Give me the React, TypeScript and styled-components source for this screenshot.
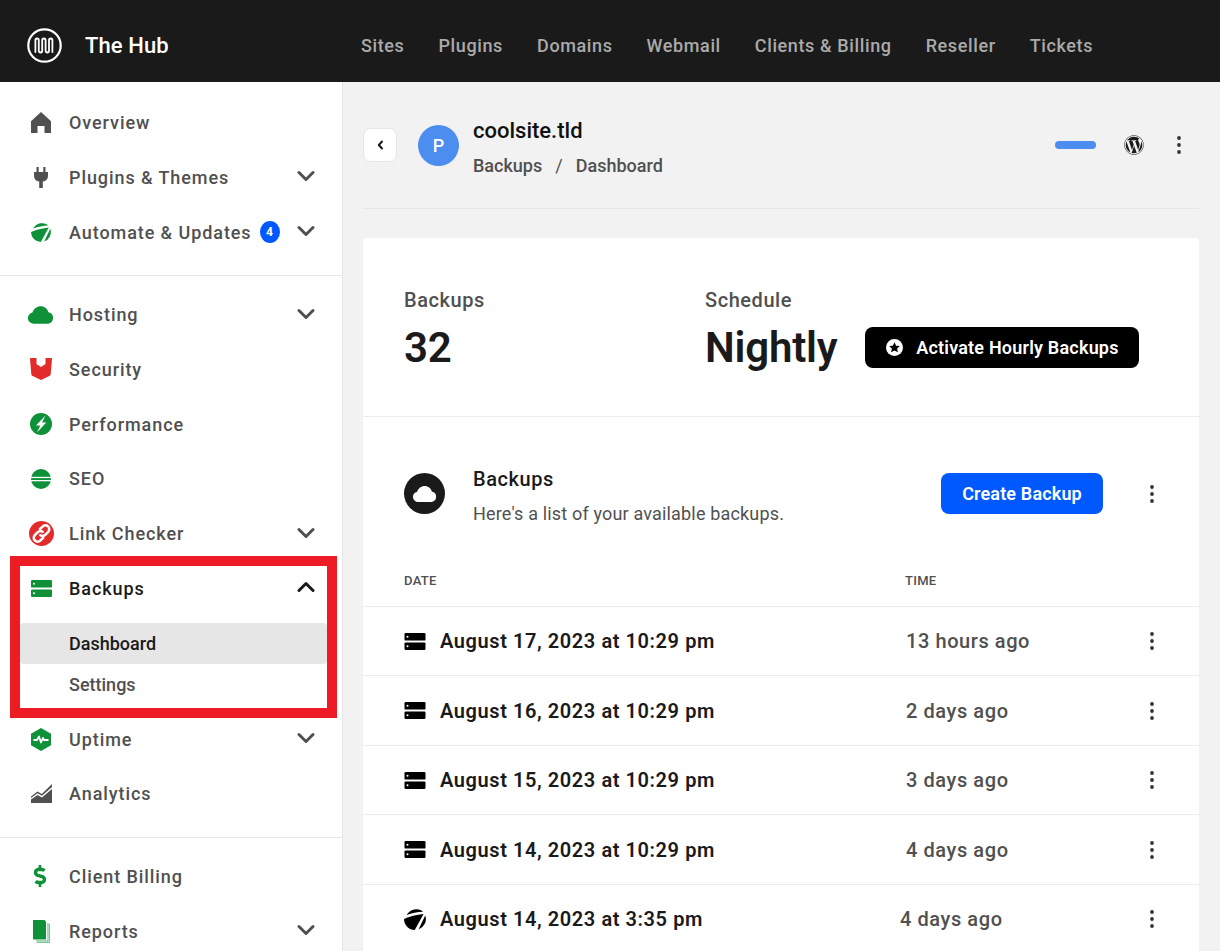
import { FC, ReactNode } from 'react';
import styled, { createGlobalStyle } from 'styled-components';
import { FaWordpress, FaDollarSign } from 'react-icons/fa';

const GREEN = '#0e9138';
const INK = '#1a1a1a';
const GREY = '#505050';

const GlobalStyle = createGlobalStyle`
    html, body {
        margin: 0;
        height: 100%;
        overflow: hidden;
    }
    body {
        font-family: Roboto, "Liberation Sans", sans-serif;
        background: #f2f2f2;
    }
    * {
        box-sizing: border-box;
    }
`

// top bar

const TopBar = styled.header`
    height: 82px;
    background: ${INK};
    display: flex;
    align-items: center;
    padding: 8px 0 0 27px;
`

const Brand = styled.div`
    display: flex;
    align-items: center;
    gap: 23px;
    width: 334px;
    color: #fff;
    font-size: 22px;
    font-weight: 500;
    letter-spacing: 0.1px;
`

const TopNav = styled.nav`
    display: flex;
    gap: 34px;
`

const TopLink = styled.a`
    color: #aaa;
    font-size: 18px;
    font-weight: 500;
    letter-spacing: 0.62px;
`

// sidebar

const Layout = styled.div`
    display: flex;
    height: 869px;
`

const Sidebar = styled.aside`
    width: 343px;
    flex: none;
    background: #fff;
    border-right: 1px solid #e6e6e6;
    position: relative;
    overflow: hidden;
`

const NavGroup = styled.div`
    padding: 13.3px 0 15.7px;
    & + & {
        border-top: 1px solid #e6e6e6;
        padding-top: 11.4px;
    }
    &:last-of-type {
        padding-top: 10.2px;
    }
`

const NavItem = styled.div`
    height: 54.7px;
    display: flex;
    align-items: center;
    padding: 0 27px 0 28px;
`

const IconSlot = styled.span`
    width: 26px;
    height: 26px;
    flex: none;
    display: flex;
    align-items: center;
    justify-content: center;
    margin-right: 15px;
`

const NavLabel = styled.span<{ $active?: boolean }>`
    font-size: 18px;
    font-weight: 500;
    letter-spacing: 0.92px;
    color: ${props => (props.$active ? INK : GREY)};
`

const Badge = styled.span`
    width: 20px;
    height: 22px;
    border-radius: 50%;
    background: #0059ff;
    color: #fff;
    font-size: 12px;
    font-weight: 700;
    display: flex;
    align-items: center;
    justify-content: center;
    margin-left: 8px;
`

const ChevronWrap = styled.span`
    margin-left: auto;
    display: flex;
    position: relative;
    top: -1px;
`

const SubNav = styled.div`
    padding: 7.6px 15px 6.5px 20px;
`

const SubItem = styled.div<{ $active?: boolean }>`
    height: 41px;
    display: flex;
    align-items: center;
    padding-left: 49px;
    font-size: 18px;
    font-weight: 500;
    color: ${props => (props.$active ? INK : GREY)};
    background: ${props => (props.$active ? '#e6e6e6' : 'transparent')};
    border-radius: 4px;
`

// annotation drawn over the sidebar
const Highlight = styled.div`
    position: absolute;
    left: 10px;
    top: 474px;
    width: 327px;
    height: 162px;
    border: 10px solid #ed1c24;
    pointer-events: none;
`

// main area

const Main = styled.main`
    flex: 1;
    padding: 0 21px 0 20px;
    overflow: hidden;
`

const SiteHeader = styled.div`
    height: 127px;
    border-bottom: 1px solid #e6e6e6;
    display: flex;
    align-items: flex-start;
    padding-top: 34px;
`

const BackButton = styled.button`
    width: 34px;
    height: 34px;
    margin-top: 12px;
    border: 1px solid #e6e6e6;
    border-radius: 8px;
    background: #fff;
    display: flex;
    align-items: center;
    justify-content: center;
    padding: 0;
`

const Avatar = styled.div`
    width: 41px;
    height: 41px;
    margin: 9px 14px 0 21px;
    border-radius: 50%;
    background: #4c8df0;
    color: #fff;
    font-size: 18px;
    font-weight: 500;
    display: flex;
    align-items: center;
    justify-content: center;
`

const SiteInfo = styled.div`
    display: flex;
    flex-direction: column;
    flex: 1;
`

const SiteName = styled.div`
    font-size: 22px;
    font-weight: 500;
    line-height: 30px;
    color: #111;
`

const Crumbs = styled.div`
    display: flex;
    gap: 13px;
    margin-top: 8px;
    font-size: 18px;
    font-weight: 500;
    line-height: 24px;
    color: ${GREY};
`

const CrumbSep = styled.span`
    font-weight: 400;
`

const HeaderActions = styled.div`
    display: flex;
    align-items: center;
    height: 20px;
    margin-top: 19px;
    padding-right: 18px;
`

const StatusBar = styled.span`
    width: 41px;
    height: 8px;
    border-radius: 4px;
    background: #4c8df0;
    margin-right: 28px;
`

const WpIcon = styled(FaWordpress)`
    font-size: 20px;
    color: ${INK};
    margin-right: 33px;
`

const Card = styled.section`
    margin-top: 29px;
    background: #fff;
    border-radius: 4px 4px 0 0;
    height: 800px;
`

const Stats = styled.div`
    height: 179px;
    border-bottom: 1px solid #ececec;
    display: flex;
    padding: 48px 0 0 41px;
`

const Stat = styled.div<{ $width?: number }>`
    width: ${props => (props.$width ? `${props.$width}px` : 'auto')};
`

const StatLabel = styled.div`
    font-size: 20px;
    font-weight: 500;
    line-height: 28px;
    letter-spacing: 0.55px;
    color: ${GREY};
`

const StatValue = styled.div`
    font-size: 42px;
    font-weight: 600;
    line-height: 48px;
    margin-top: 10px;
    letter-spacing: -0.2px;
    color: ${INK};
`

const UpsellButton = styled.button`
    align-self: flex-start;
    margin: 41px 0 0 28px;
    width: 274px;
    height: 41px;
    border: none;
    border-radius: 8px;
    background: #000;
    color: #fff;
    font-family: inherit;
    font-size: 18px;
    font-weight: 600;
    letter-spacing: 0.2px;
    display: flex;
    align-items: center;
    justify-content: center;
    gap: 13px;
`

const ListHead = styled.div`
    height: 133px;
    padding: 56px 45px 0 41px;
`

const ListRow = styled.div`
    display: flex;
    align-items: center;
    height: 41px;
`

const CloudBadge = styled.div`
    width: 41px;
    height: 41px;
    border-radius: 50%;
    background: ${INK};
    display: flex;
    align-items: center;
    justify-content: center;
    margin-right: 28px;
`

const ListText = styled.div`
    flex: 1;
    margin-top: 4px;
`

const ListTitle = styled.div`
    font-size: 20px;
    font-weight: 500;
    line-height: 28px;
    letter-spacing: 0.55px;
    color: ${INK};
`

const ListHint = styled.div`
    font-size: 18px;
    line-height: 24px;
    margin-top: 9px;
    letter-spacing: 0.17px;
    color: ${GREY};
`

const CreateButton = styled.button`
    width: 162px;
    height: 41px;
    border: none;
    border-radius: 8px;
    background: #0059ff;
    color: #fff;
    font-family: inherit;
    font-size: 18px;
    font-weight: 600;
    letter-spacing: 0.15px;
    margin-right: 47px;
`

const TableHead = styled.div`
    display: grid;
    grid-template-columns: 501px 1fr;
    height: 56.7px;
    padding: 5px 0 0 41px;
    align-items: center;
    border-bottom: 1px solid #ececec;
    font-size: 13px;
    font-weight: 500;
    letter-spacing: 0.3px;
    color: ${GREY};
`

const Row = styled.div<{ $timeAt: number }>`
    display: grid;
    grid-template-columns: ${props => props.$timeAt}px 1fr 4px;
    height: 69.5px;
    padding: 0.6px 45px 0 41px;
    align-items: center;
    border-bottom: 1px solid #ececec;
`

const RowDate = styled.div`
    display: flex;
    align-items: center;
    gap: 14px;
    font-size: 20px;
    font-weight: 600;
    letter-spacing: 0.58px;
    color: ${INK};
`

const RowTime = styled.div`
    font-size: 20px;
    font-weight: 500;
    letter-spacing: 0.58px;
    color: ${GREY};
`

// icons

const Chevron: FC<{ up?: boolean; color?: string }> = ({ up, color = '#505050' }) => (
    <svg width="18" height="12" viewBox="0 0 18 12" fill="none" stroke={color} strokeWidth="3" strokeLinecap="round" strokeLinejoin="round">
        <path d={up ? 'M2 9.5 9 2.5 16 9.5' : 'M2 2.5 9 9.5 16 2.5'} />
    </svg>
)

const Kebab: FC = () => (
    <svg width="4" height="18" viewBox="0 0 4 18" fill="#333">
        <circle cx="2" cy="2" r="1.9" />
        <circle cx="2" cy="9" r="1.9" />
        <circle cx="2" cy="16" r="1.9" />
    </svg>
)

const Logo: FC = () => (
    <svg width="35" height="35" viewBox="0 0 35 35" fill="none" stroke="#fff" strokeWidth="2.2" strokeLinecap="round" strokeLinejoin="round">
        <circle cx="17.5" cy="17.5" r="16.2" />
        <path strokeWidth="1.8" d="M8.400 24V12.200a1.700 1.700 0 0 1 3.400 0v10.600a1.700 1.700 0 0 0 3.400 0V12.200a1.700 1.700 0 0 1 3.400 0v10.600a1.700 1.700 0 0 0 3.400 0V12.200a1.700 1.700 0 0 1 3.400 0V24" />
    </svg>
)

const ServerIcon: FC<{ color: string; width?: number }> = ({ color, width = 21 }) => (
    <svg width={width} height="17" viewBox="0 0 21 17" fill={color}>
        <rect width="21" height="7.6" rx="1.2" />
        <rect y="9.4" width="21" height="7.6" rx="1.2" />
        <circle cx="3" cy="3.8" r="1" fill="#fff" />
        <circle cx="3" cy="13.2" r="1" fill="#fff" />
    </svg>
)

const AutomateIcon: FC<{ color: string; size?: number }> = ({ color, size = 20 }) => (
    <svg width={size} height={size} viewBox="0 0 20 20" fill={color}>
        <path d="M2.300 6.400A10 10 0 0 1 17.400 3.400C12 3.600 7 4.600 2.300 6.400Z" />
        <path d="M0 10C5 7.800 11.500 6 17.800 5.400L9.800 20A10 10 0 0 1 0 10Z" />
        <path d="M19.300 6.800A10 10 0 0 1 13.200 19.500Z" />
    </svg>
)

const HomeIcon: FC = () => (
    <svg width="20" height="21" viewBox="0 0 20 21" fill="#505050">
        <path d="M10 0 20 9.2V21h-6.5v-7h-7v7H0V9.2Z" />
    </svg>
)

const PlugIcon: FC = () => (
    <svg width="14" height="21" viewBox="0 0 14 21" fill="#505050">
        <path d="M2.500 0h2.200v5h4.600V0h2.200v5H14v4c0 3-1.900 5-5.200 5.600V21H5.200v-6.400C1.900 14 0 12 0 9V5h2.500Z" />
    </svg>
)

const CloudIcon: FC<{ color: string; width?: number; height?: number }> = ({ color, width = 27, height = 18 }) => (
    <svg width={width} height={height} viewBox="0 0 27 18" fill={color}>
        <path d="M6 18a5.800 5.800 0 0 1-1.300-11.500C5.700 2.600 9.300 0 13.200 0c3.800 0 7 2.500 8 6.200A6 6 0 0 1 21 18Z" />
    </svg>
)

const ShieldIcon: FC = () => (
    <svg width="22" height="22" viewBox="0 0 22 22">
        <path fill="#e22b2b" d="M1 0h5.500v6l4.500 3 4.500-3V0H21c.6 0 1 .4 1 1l-1.300 15c-.1 1-.6 1.600-1.400 2L11 22l-8.300-4c-.8-.4-1.300-1-1.400-2L0 1c0-.6.4-1 1-1Z" />
    </svg>
)

const BoltIcon: FC = () => (
    <svg width="22" height="22" viewBox="0 0 22 22">
        <circle cx="11" cy="11" r="11" fill={GREEN} />
        <path fill="#fff" d="M15.500 2.500 6 12.500h4.300l-3.300 7 9.300-10h-4.300Z" />
    </svg>
)

const SeoIcon: FC = () => (
    <svg width="20" height="20" viewBox="0 0 20 20">
        <circle cx="10" cy="10" r="10" fill={GREEN} />
        <rect y="7.800" width="20" height="1.300" fill="#fff" />
        <rect y="11" width="20" height="1.300" fill="#fff" />
    </svg>
)

const LinkIcon: FC = () => (
    <svg width="25" height="25" viewBox="0 0 25 25" fill="none" stroke="#fff" strokeWidth="2.600" strokeLinecap="round">
        <circle cx="12.500" cy="12.500" r="12.500" fill="#e22b2b" stroke="none" />
        <path d="M11 8l2.600-2.400a3.800 3.800 0 0 1 5.600 5.200l-3 3a3.800 3.800 0 0 1-4.800.4" />
        <path d="M14 17l-2.600 2.400a3.800 3.800 0 0 1-5.600-5.200l3-3a3.800 3.800 0 0 1 4.800-.4" />
    </svg>
)

const UptimeIcon: FC = () => (
    <svg width="20" height="23" viewBox="0 0 20 23">
        <path fill={GREEN} d="M10 0 20 5.700v11.600L10 23 0 17.300V5.700Z" />
        <path fill="none" stroke="#fff" strokeWidth="1.800" strokeLinejoin="round" d="M2.500 12H6l2-3.500 2 6 2-4.500 1 2h4.500" />
    </svg>
)

const AnalyticsIcon: FC = () => (
    <svg width="21" height="19" viewBox="0 0 21 19" fill="#505050">
        <path d="M0 19v-3.500l6.500-4.500 4.500 2.500L21 5v14Z" />
        <path d="M0 12.500 6.500 7.500 10.800 10 21 0v3L11 11.800 6.500 9.200 0 14Z" />
    </svg>
)

const DollarIcon = styled(FaDollarSign)`
    font-size: 22px;
    color: ${GREEN};
    margin-left: -2px;
`

const ReportsIcon: FC = () => (
    <svg width="17" height="23" viewBox="0 0 17 23">
        <path fill="#7cc596" d="M4 4h13v19H4Z" />
        <path fill="#fff" d="M3 3h13v19H3Z" />
        <path fill="#5fb480" d="M3 3h12.500v18.500H3Z" />
        <path fill="#fff" d="M2 2h12.500v18.500H2Z" />
        <path fill={GREEN} d="M0 0h11.500l1.500 1.500v18H0Z" />
    </svg>
)

const StarBadge: FC = () => (
    <svg width="17" height="17" viewBox="0 0 17 17">
        <circle cx="8.500" cy="8.500" r="8.500" fill="#fff" />
        <path fill="#000" d="m8.500 3.200 1.600 3.500 3.800.4-2.800 2.500.8 3.700-3.400-1.900-3.400 1.900.8-3.700L3.100 7.100l3.800-.4Z" />
    </svg>
)

// nav data

interface INavEntry {
    label: string;
    icon: ReactNode;
    expand?: boolean;
    badge?: string;
}

const first: INavEntry[] = [
    { label: 'Overview', icon: <HomeIcon /> },
    { label: 'Plugins & Themes', icon: <PlugIcon />, expand: true },
    { label: 'Automate & Updates', icon: <AutomateIcon color={GREEN} />, expand: true, badge: '4' },
]

const second: INavEntry[] = [
    { label: 'Hosting', icon: <CloudIcon color={GREEN} />, expand: true },
    { label: 'Security', icon: <ShieldIcon /> },
    { label: 'Performance', icon: <BoltIcon /> },
    { label: 'SEO', icon: <SeoIcon /> },
    { label: 'Link Checker', icon: <LinkIcon />, expand: true },
]

const afterBackups: INavEntry[] = [
    { label: 'Uptime', icon: <UptimeIcon />, expand: true },
    { label: 'Analytics', icon: <AnalyticsIcon /> },
]

const third: INavEntry[] = [
    { label: 'Client Billing', icon: <DollarIcon /> },
    { label: 'Reports', icon: <ReportsIcon />, expand: true },
]

const NavRow: FC<{ entry: INavEntry }> = ({ entry }) => (
    <NavItem>
        <IconSlot>{entry.icon}</IconSlot>
        <NavLabel>{entry.label}</NavLabel>
        {entry.badge && <Badge>{entry.badge}</Badge>}
        {entry.expand && <ChevronWrap><Chevron /></ChevronWrap>}
    </NavItem>
)

const backups = [
    { date: 'August 17, 2023 at 10:29 pm', ago: '13 hours ago', timeAt: 502 },
    { date: 'August 16, 2023 at 10:29 pm', ago: '2 days ago', timeAt: 502 },
    { date: 'August 15, 2023 at 10:29 pm', ago: '3 days ago', timeAt: 502 },
    { date: 'August 14, 2023 at 10:29 pm', ago: '4 days ago', timeAt: 502 },
    { date: 'August 14, 2023 at 3:35 pm', ago: '4 days ago', timeAt: 496, auto: true },
]

const App: FC = () => (
    <>
        <GlobalStyle />
        <TopBar>
            <Brand>
                <Logo />
                The Hub
            </Brand>
            <TopNav>
                {['Sites', 'Plugins', 'Domains', 'Webmail', 'Clients & Billing', 'Reseller', 'Tickets'].map(l => (
                    <TopLink key={l}>{l}</TopLink>
                ))}
            </TopNav>
        </TopBar>
        <Layout>
            <Sidebar>
                <NavGroup>
                    {first.map(e => <NavRow key={e.label} entry={e} />)}
                </NavGroup>
                <NavGroup>
                    {second.map(e => <NavRow key={e.label} entry={e} />)}
                    <NavItem>
                        <IconSlot><ServerIcon color={GREEN} /></IconSlot>
                        <NavLabel $active>Backups</NavLabel>
                        <ChevronWrap><Chevron up color={INK} /></ChevronWrap>
                    </NavItem>
                    <SubNav>
                        <SubItem $active>Dashboard</SubItem>
                        <SubItem>Settings</SubItem>
                    </SubNav>
                    {afterBackups.map(e => <NavRow key={e.label} entry={e} />)}
                </NavGroup>
                <NavGroup>
                    {third.map(e => <NavRow key={e.label} entry={e} />)}
                </NavGroup>
                <Highlight />
            </Sidebar>
            <Main>
                <SiteHeader>
                    <BackButton>
                        <svg width="7" height="10" viewBox="0 0 7 10" fill="none" stroke="#1a1a1a" strokeWidth="2" strokeLinecap="round" strokeLinejoin="round">
                            <path d="M5 1.500 1.800 5 5 8.500" />
                        </svg>
                    </BackButton>
                    <Avatar>P</Avatar>
                    <SiteInfo>
                        <SiteName>coolsite.tld</SiteName>
                        <Crumbs>
                            <span>Backups</span>
                            <CrumbSep>/</CrumbSep>
                            <span>Dashboard</span>
                        </Crumbs>
                    </SiteInfo>
                    <HeaderActions>
                        <StatusBar />
                        <WpIcon />
                        <Kebab />
                    </HeaderActions>
                </SiteHeader>
                <Card>
                    <Stats>
                        <Stat $width={301}>
                            <StatLabel>Backups</StatLabel>
                            <StatValue>32</StatValue>
                        </Stat>
                        <Stat>
                            <StatLabel>Schedule</StatLabel>
                            <StatValue>Nightly</StatValue>
                        </Stat>
                        <UpsellButton>
                            <StarBadge />
                            Activate Hourly Backups
                        </UpsellButton>
                    </Stats>
                    <ListHead>
                        <ListRow>
                            <CloudBadge><CloudIcon color="#fff" width={24} height={16} /></CloudBadge>
                            <ListText>
                                <ListTitle>Backups</ListTitle>
                                <ListHint>Here's a list of your available backups.</ListHint>
                            </ListText>
                            <CreateButton>Create Backup</CreateButton>
                            <Kebab />
                        </ListRow>
                    </ListHead>
                    <TableHead>
                        <span>DATE</span>
                        <span>TIME</span>
                    </TableHead>
                    {backups.map(b => (
                        <Row key={b.date} $timeAt={b.timeAt}>
                            <RowDate>
                                {b.auto ? <AutomateIcon color="#000" size={22} /> : <ServerIcon color="#000" width={22} />}
                                {b.date}
                            </RowDate>
                            <RowTime>{b.ago}</RowTime>
                            <Kebab />
                        </Row>
                    ))}
                </Card>
            </Main>
        </Layout>
    </>
)

export default App;
